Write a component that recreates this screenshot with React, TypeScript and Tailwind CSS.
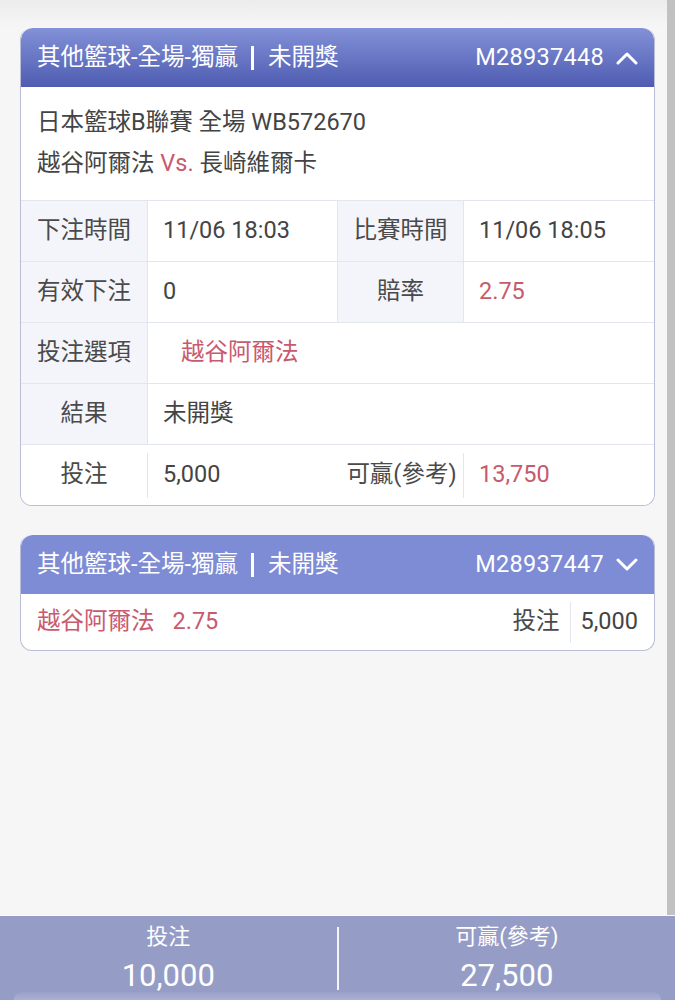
import React from "react";

const FONT = { fontFamily: "Roboto, 'Noto Sans CJK TC', 'Noto Sans', sans-serif" };

function ChevronUp() {
  return (
    <svg width="22" height="14" viewBox="0 0 22 14" fill="none">
      <polyline points="2,12 11,3 20,12" stroke="white" strokeWidth="3" strokeLinecap="round" strokeLinejoin="round" />
    </svg>
  );
}
function ChevronDown() {
  return (
    <svg width="22" height="14" viewBox="0 0 22 14" fill="none">
      <polyline points="2,2 11,11 20,2" stroke="white" strokeWidth="3" strokeLinecap="round" strokeLinejoin="round" />
    </svg>
  );
}

function Header({ id, open, gradient }: { id: string; open: boolean; gradient: boolean }) {
  return (
    <div
      className={`flex h-[59px] items-center justify-between rounded-t-[12px] pl-[16px] pr-[16px] text-[23.5px] text-white ${
        gradient ? "bg-gradient-to-b from-[#8391d8] to-[#4f5cb1]" : "bg-[#7e8bd5]"
      }`}
    >
      <div className="flex items-center">
        <span>其他籃球-全場-獨贏</span>
        <span className="ml-[13px] mr-[14px] h-[24px] w-[3px] bg-white" />
        <span>未開獎</span>
      </div>
      <div className="flex items-center gap-[12px]">
        <span className="tracking-[0.3px]">{id}</span>
        {open ? <ChevronUp /> : <ChevronDown />}
      </div>
    </div>
  );
}

const label = "flex items-center justify-center bg-[#f4f5fa] border-r border-[#e4e6ef] text-[#4a4a4a]";
const value = "flex items-center pl-[15px] bg-white text-[#444444]";

export default function App() {
  return (
    <div className="relative flex h-[1000px] w-[675px] flex-col overflow-hidden bg-[#f6f6f6]" style={FONT}>
      <div className="flex flex-1">
        <div className="flex flex-1 flex-col gap-[29px] pl-[20px] pr-[12px] pt-[28px] bg-gradient-to-b from-[#ececec] via-[#f6f6f6] via-[3%] to-[#f6f6f6]">
          {/* Card 1 */}
          <div className="overflow-hidden rounded-[12px] border border-[#b9bdd8] border-t-0 bg-white">
            <Header id="M28937448" open gradient />
            <div className="pb-[16px] pl-[16px] pt-[15px] text-[23.5px] leading-[41px] text-[#444444]">
              <div>日本籃球B聯賽 全場 WB572670</div>
              <div>
                越谷阿爾法 <span className="text-[#c85a6e]">Vs.</span> 長崎維爾卡
              </div>
            </div>
            <div className="grid grid-cols-[127px_190px_126px_1fr] text-[23.5px]">
              <div className={`${label} h-[61px] border-t`}>下注時間</div>
              <div className={`${value} h-[61px] border-t border-r border-[#e4e6ef]`}>11/06 18:03</div>
              <div className={`${label} h-[61px] border-t`}>比賽時間</div>
              <div className={`${value} h-[61px] border-t border-[#e4e6ef]`}>11/06 18:05</div>

              <div className={`${label} h-[61px] border-t`}>有效下注</div>
              <div className={`${value} h-[61px] border-t border-r border-[#e4e6ef]`}>0</div>
              <div className={`${label} h-[61px] border-t`}>賠率</div>
              <div className={`${value} h-[61px] border-t border-[#e4e6ef] text-[#c85a6e]`}>2.75</div>

              <div className={`${label} h-[61px] border-t`}>投注選項</div>
              <div className={`${value} col-span-3 h-[61px] border-t border-[#e4e6ef] pl-[33px] text-[#c85a6e]`}>越谷阿爾法</div>

              <div className={`${label} h-[61px] border-t`}>結果</div>
              <div className={`${value} col-span-3 h-[61px] border-t border-[#e4e6ef]`}>未開獎</div>

              <div className="flex h-[61px] items-center border-t border-[#e4e6ef] bg-white">
                <div className="flex flex-1 justify-center text-[#4a4a4a]">投注</div>
                <div className="h-[45px] w-px self-center bg-[#e4e6ef]" />
              </div>
              <div className={`${value} h-[61px] border-t border-[#e4e6ef]`}>5,000</div>
              <div className="flex h-[61px] items-center border-t border-[#e4e6ef] bg-white">
                <div className="flex flex-1 justify-center pl-[2px] text-[#4a4a4a]">可贏(參考)</div>
                <div className="h-[45px] w-px self-center bg-[#e4e6ef]" />
              </div>
              <div className={`${value} h-[61px] border-t border-[#e4e6ef] text-[#c85a6e]`}>13,750</div>
            </div>
          </div>

          {/* Card 2 */}
          <div className="overflow-hidden rounded-[12px] border border-[#b9bdd8] border-t-0 bg-white">
            <Header id="M28937447" open={false} gradient={false} />
            <div className="flex h-[56px] items-center justify-between pl-[16px] pr-[16px] text-[23.5px]">
              <div className="flex items-center text-[#c85a6e]">
                <span>越谷阿爾法</span>
                <span className="ml-[18px]">2.75</span>
              </div>
              <div className="flex items-center">
                <span className="text-[#4a4a4a]">投注</span>
                <div className="mx-[10px] h-[41px] w-px bg-[#e4e6ef]" />
                <span className="text-[#444444]">5,000</span>
              </div>
            </div>
          </div>
        </div>
        <div className="w-[8px] bg-[#c1c1c1]" />
      </div>

      {/* Bottom bar */}
      <div className="relative flex h-[85px] border-t border-[#fbfbfd] bg-[#959dc6] text-white">
        <div className="flex flex-1 flex-col items-center pt-[5px]">
          <div className="text-[22px] leading-[32px]">投注</div>
          <div className="text-[31px] leading-[46px]">10,000</div>
        </div>
        <div className="mt-[11px] h-[63px] w-[2px] bg-white/90" />
        <div className="flex flex-1 flex-col items-center pt-[5px]">
          <div className="text-[22px] leading-[32px]">可贏(參考)</div>
          <div className="text-[31px] leading-[46px]">27,500</div>
        </div>
        <div className="absolute bottom-0 left-[14px] right-[14px] h-[8px] rounded-t-[10px] bg-gradient-to-b from-[#9aa1ca] to-[#a9afd6]" />
      </div>
    </div>
  );
}
